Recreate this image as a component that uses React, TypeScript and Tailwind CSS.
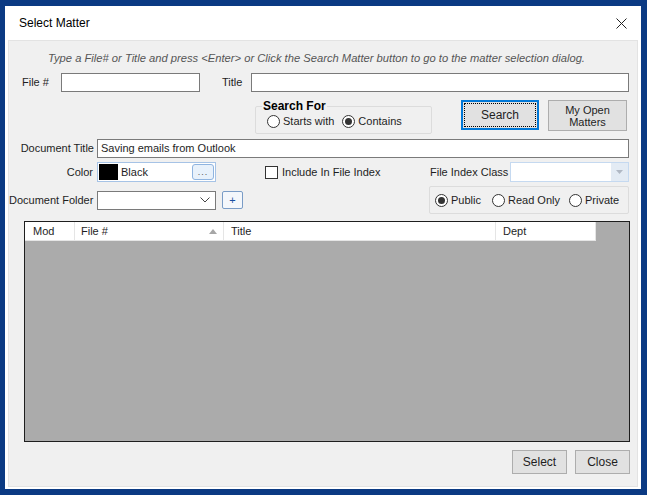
import React from "react";

const font = { fontFamily: '"Liberation Sans", Arial, sans-serif' };

function Radio({ checked, label, className = "" }: { checked?: boolean; label: string; className?: string }) {
  return (
    <div className={"flex items-center " + className}>
      <div className="w-[13px] h-[13px] rounded-full border border-[#333333] bg-white flex items-center justify-center">
        {checked && <div className="w-[7px] h-[7px] rounded-full bg-[#333333]" />}
      </div>
      <span className="ml-[3px] leading-[13px]">{label}</span>
    </div>
  );
}

function WinButton({ children, className = "" }: { children: React.ReactNode; className?: string }) {
  return (
    <div className={"bg-[#e1e1e1] border border-[#adadad] flex items-center justify-center text-center " + className}>
      {children}
    </div>
  );
}

export default function App() {
  return (
    <div style={font} className="w-[647px] h-[495px] bg-[#0b3a83] pt-[6px] pl-[5px] pr-[6px] pb-[6px] flex text-[11px] text-[#1e1e1e]">
      <div className="flex-1 bg-white flex flex-col px-[3px] pb-[2px]">
        {/* title bar */}
        <div className="h-[34px] flex items-center justify-between shrink-0">
          <span className="ml-[11px] text-[12px] text-black">Select Matter</span>
          <svg width="11" height="11" viewBox="0 0 11 11" className="mr-[11px]">
            <path d="M0.5 0.5 L10.5 10.5 M10.5 0.5 L0.5 10.5" stroke="#222" strokeWidth="1" />
          </svg>
        </div>
        {/* panel */}
        <div className="flex-1 bg-[#f0f0f0] border border-[#e3e3e3] flex flex-col">
          <div className="mt-[10px] h-[14px] leading-[14px] pl-[39px] italic text-[11.2px] text-[#555555] whitespace-nowrap">
            Type a File# or Title and press &lt;Enter&gt; or Click the Search Matter button to go to the matter selection dialog.
          </div>
          {/* File # / Title */}
          <div className="mt-[8px] h-[19px] flex items-center">
            <span className="ml-[13px] w-[39px]">File #</span>
            <div className="w-[139px] h-[19px] bg-white border border-[#7a7a7a]" />
            <span className="ml-[22px] w-[29px]">Title</span>
            <div className="w-[378px] h-[19px] bg-white border border-[#7a7a7a]" />
          </div>
          {/* Search For row */}
          <div className="mt-[8px] h-[34px] flex items-start">
            <fieldset className="ml-[246px] w-[177px] h-[34px] border border-[#dcdcdc] rounded-[2px] flex items-center">
              <legend className="ml-[6px] px-[1px] font-bold text-[12px] leading-[12px] text-black">Search For</legend>
              <div className="flex items-center mb-[2px]">
                <Radio label="Starts with" className="ml-[11px]" />
                <Radio label="Contains" checked className="ml-[8px]" />
              </div>
            </fieldset>
            <div className="ml-[29px] w-[78px] h-[30px] bg-[#e1e1e1] border-2 border-[#0078d7] p-[1px]">
              <div className="w-full h-full border border-dotted border-black flex items-center justify-center text-[12px]">
                Search
              </div>
            </div>
            <WinButton className="ml-[9px] w-[79px] h-[31px] leading-[12px] text-[11px]">
              <span>
                My Open
                <br />
                Matters
              </span>
            </WinButton>
          </div>
          {/* Document Title */}
          <div className="mt-[5px] h-[19px] flex items-center">
            <span className="w-[88px] text-right pr-[3px] whitespace-nowrap">Document Title</span>
            <div className="w-[532px] h-[19px] bg-white border border-[#7a7a7a] flex items-center pl-[3px] text-[11px]">
              Saving emails from Outlook
            </div>
          </div>
          {/* Color row */}
          <div className="mt-[4px] h-[20px] flex items-center">
            <span className="w-[88px] text-right pr-[4px]">Color</span>
            <div className="w-[119px] h-[20px] bg-white border border-[#a6c3e6] flex items-center">
              <div className="ml-[1px] w-[19px] h-[16px] bg-black" />
              <span className="ml-[3px]">Black</span>
              <div className="ml-auto mr-[1px] w-[22px] h-[16px] rounded-[3px] border border-[#8fb4e0] bg-[#e8f1fb] flex items-center justify-center text-[9px] text-[#555] leading-[9px] tracking-[1px]">
                ...
              </div>
            </div>
            <div className="ml-[49px] w-[165px] flex items-center">
              <div className="w-[13px] h-[13px] border border-[#333333] bg-white" />
              <span className="ml-[4px]">Include In File Index</span>
            </div>
            <span className="w-[80px] whitespace-nowrap">File Index Class</span>
            <div className="w-[119px] h-[20px] bg-white border border-[#c5d9f0] flex items-stretch justify-end">
              <div className="w-[17px] bg-[#e3ebf4] flex items-center justify-center">
                <svg width="7" height="4" viewBox="0 0 7 4">
                  <path d="M0 0 L7 0 L3.5 4 Z" fill="#b0b8c4" />
                </svg>
              </div>
            </div>
          </div>
          {/* Document Folder row */}
          <div className="mt-[4px] h-[28px] flex items-center">
            <span className="w-[88px] text-right pr-[4px] whitespace-nowrap">Document Folder</span>
            <div className="w-[119px] h-[19px] bg-white border border-[#7a7a7a] flex items-center justify-end pr-[5px]">
              <svg width="10" height="6" viewBox="0 0 10 6">
                <path d="M0.5 0.5 L5 5 L9.5 0.5" stroke="#444" strokeWidth="1" fill="none" />
              </svg>
            </div>
            <div className="ml-[6px] w-[21px] h-[18px] rounded-[2px] border border-[#7a9cc6] bg-[#f4f7fb] flex items-center justify-center text-[#1a4fa0] text-[11px] leading-[11px]">
              +
            </div>
            <div className="ml-[186px] w-[200px] h-[28px] border border-[#dcdcdc] rounded-[2px] flex items-center">
              <Radio label="Public" checked className="ml-[5px]" />
              <Radio label="Read Only" className="ml-[11px]" />
              <Radio label="Private" className="ml-[9px]" />
            </div>
          </div>
          {/* Grid */}
          <div className="mt-[7px] ml-[15px] w-[606px] h-[221px] border border-[#1e1e1e] bg-[#ababab] flex flex-col">
            <div className="h-[19px] flex">
              <div className="w-[50px] bg-white border-r border-b border-[#e5e5e5] flex items-center pl-[8px]">Mod</div>
              <div className="w-[149px] bg-white border-r border-b border-[#e5e5e5] flex items-center pl-[6px]">
                <span>File #</span>
                <svg width="8" height="5" viewBox="0 0 8 5" className="ml-auto mr-[6px]">
                  <path d="M0 5 L8 5 L4 0 Z" fill="#a6a6a6" />
                </svg>
              </div>
              <div className="w-[272px] bg-white border-r border-b border-[#e5e5e5] flex items-center pl-[7px]">Title</div>
              <div className="w-[100px] bg-white border-r border-b border-[#e5e5e5] flex items-center pl-[7px]">Dept</div>
            </div>
          </div>
          {/* Bottom buttons */}
          <div className="mt-[8px] h-[24px] flex justify-end pr-[7px] gap-[8px]">
            <WinButton className="w-[55px] h-[24px] text-[12px]">Select</WinButton>
            <WinButton className="w-[55px] h-[24px] text-[12px]">Close</WinButton>
          </div>
        </div>
      </div>
    </div>
  );
}
